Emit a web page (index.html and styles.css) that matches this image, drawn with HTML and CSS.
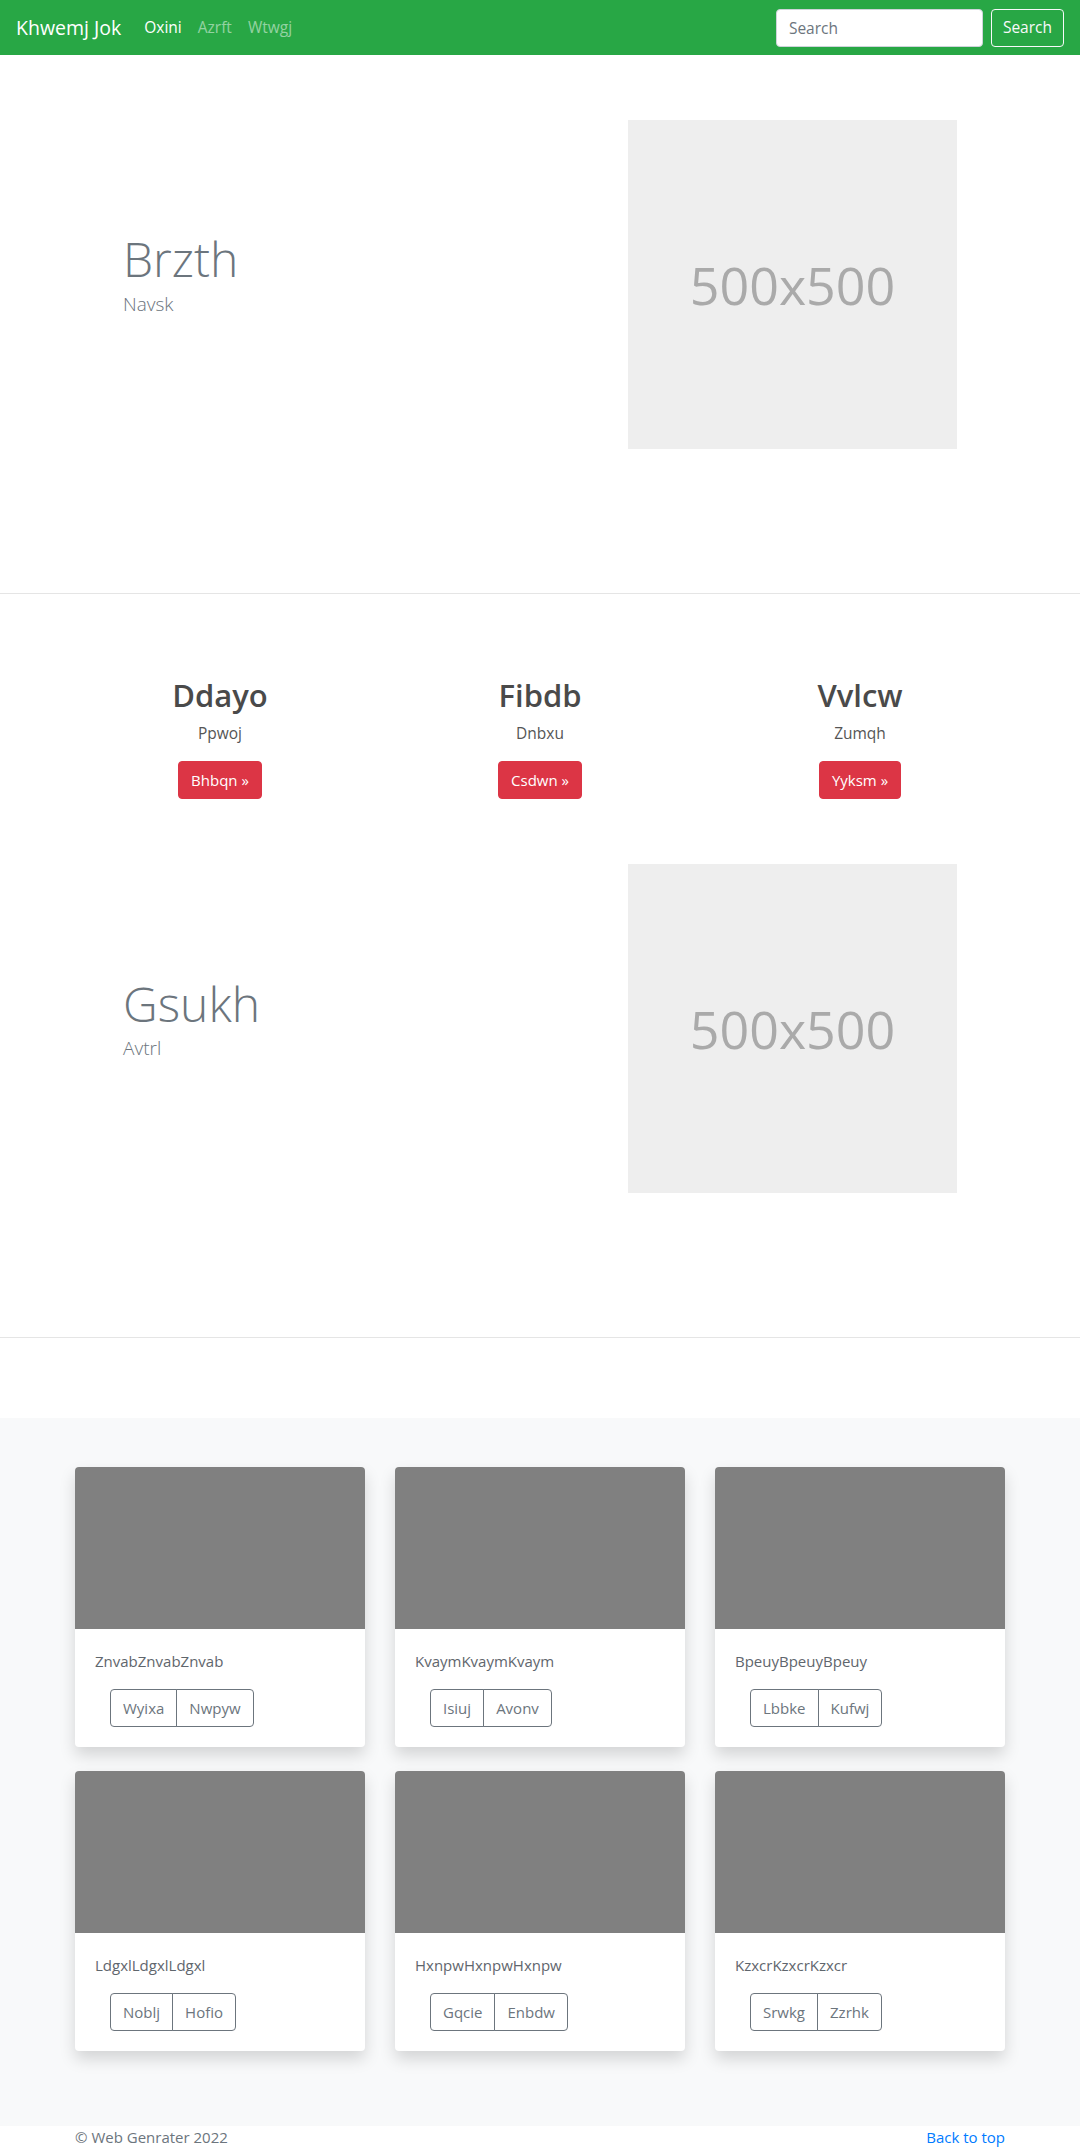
FILE: index.html
```html
<!DOCTYPE html>
<html lang="en">
<head>
<meta charset="utf-8">
<title>Khwemj Jok</title>
<link rel="stylesheet" href="styles.css">
</head>
<body>
<nav class="navbar">
  <a class="brand" href="#">Khwemj Jok</a>
  <ul class="nav">
    <li><a class="nav-link active" href="#">Oxini</a></li>
    <li><a class="nav-link" href="#">Azrft</a></li>
    <li><a class="nav-link" href="#">Wtwgj</a></li>
  </ul>
  <form class="search">
    <input class="search-input" type="text" placeholder="Search">
    <button class="search-btn" type="button">Search</button>
  </form>
</nav>

<section class="hero">
  <div class="container hero-row">
    <div class="hero-text">
      <h1 class="display">Brzth</h1>
      <p class="lead">Navsk</p>
    </div>
    <div class="hero-media">
      <div class="placeholder">500x500</div>
    </div>
  </div>
</section>
<hr class="divider">

<section class="features">
  <div class="feature-row">
    <div class="feature">
      <h2>Ddayo</h2>
      <p>Ppwoj</p>
      <a class="btn-danger" href="#">Bhbqn &raquo;</a>
    </div>
    <div class="feature">
      <h2>Fibdb</h2>
      <p>Dnbxu</p>
      <a class="btn-danger" href="#">Csdwn &raquo;</a>
    </div>
    <div class="feature">
      <h2>Vvlcw</h2>
      <p>Zumqh</p>
      <a class="btn-danger" href="#">Yyksm &raquo;</a>
    </div>
  </div>
</section>

<section class="hero">
  <div class="container hero-row">
    <div class="hero-text">
      <h1 class="display">Gsukh</h1>
      <p class="lead">Avtrl</p>
    </div>
    <div class="hero-media">
      <div class="placeholder">500x500</div>
    </div>
  </div>
</section>
<hr class="divider">

<section class="album">
  <div class="container card-grid">
    <div class="card">
      <div class="card-img"></div>
      <div class="card-body">
        <p class="card-text">ZnvabZnvabZnvab</p>
        <div class="btn-group"><button type="button">Wyixa</button><button type="button">Nwpyw</button></div>
      </div>
    </div>
    <div class="card">
      <div class="card-img"></div>
      <div class="card-body">
        <p class="card-text">KvaymKvaymKvaym</p>
        <div class="btn-group"><button type="button">Isiuj</button><button type="button">Avonv</button></div>
      </div>
    </div>
    <div class="card">
      <div class="card-img"></div>
      <div class="card-body">
        <p class="card-text">BpeuyBpeuyBpeuy</p>
        <div class="btn-group"><button type="button">Lbbke</button><button type="button">Kufwj</button></div>
      </div>
    </div>
    <div class="card">
      <div class="card-img"></div>
      <div class="card-body">
        <p class="card-text">LdgxlLdgxlLdgxl</p>
        <div class="btn-group"><button type="button">Noblj</button><button type="button">Hofio</button></div>
      </div>
    </div>
    <div class="card">
      <div class="card-img"></div>
      <div class="card-body">
        <p class="card-text">HxnpwHxnpwHxnpw</p>
        <div class="btn-group"><button type="button">Gqcie</button><button type="button">Enbdw</button></div>
      </div>
    </div>
    <div class="card">
      <div class="card-img"></div>
      <div class="card-body">
        <p class="card-text">KzxcrKzxcrKzxcr</p>
        <div class="btn-group"><button type="button">Srwkg</button><button type="button">Zzrhk</button></div>
      </div>
    </div>
  </div>
</section>

<footer class="footer container">
  <p class="copy">&copy; Web Genrater 2022</p>
  <a class="to-top" href="#">Back to top</a>
</footer>
</body>
</html>
```

FILE: styles.css
```css
* { box-sizing: border-box; }

html, body { margin: 0; padding: 0; }

body {
  font-family: "Open Sans", "Liberation Sans", sans-serif;
  font-size: 16px;
  line-height: 1.5;
  color: #212529;
  background: #fff;
}

a { text-decoration: none; }

.container {
  width: 960px;
  margin: 0 auto;
  padding: 0 15px;
}

/* Navbar */
.navbar {
  height: 55px;
  background: #28a745;
  display: flex;
  align-items: center;
  padding: 0 16px;
}

.brand {
  font-size: 19.5px;
  line-height: 30px;
  color: #fff;
  margin-right: 15px;
}

.nav {
  list-style: none;
  margin: 0;
  padding: 0;
  display: flex;
}

.nav-link {
  display: block;
  padding: 8px 8px;
  font-size: 15.5px;
  color: rgba(255, 255, 255, 0.5);
}

.nav-link.active { color: #fff; }

.search {
  margin-left: auto;
  display: flex;
  gap: 8px;
}

.search-input {
  width: 207px;
  height: 38px;
  padding: 6px 12px;
  font-family: inherit;
  font-size: 15.5px;
  color: #495057;
  background: #fff;
  border: 1px solid #ced4da;
  border-radius: 4px;
}

.search-input::placeholder { color: #6c757d; }

.search-btn {
  height: 38px;
  padding: 6px 11px;
  font-family: inherit;
  font-size: 15.5px;
  line-height: 1.5;
  color: #f8f9fa;
  background: transparent;
  border: 1px solid #f8f9fa;
  border-radius: 4px;
}

/* Hero */
.hero {
  padding: 65px 0 144px;
}

.hero-row {
  display: flex;
  align-items: center;
}

.hero-text {
  flex: 1;
  padding: 0 48px;
}

.hero-media {
  flex: 1;
  display: flex;
  justify-content: flex-end;
  padding-right: 48px;
}

.display {
  margin: 0 0 2px;
  font-size: 48px;
  font-weight: 300;
  line-height: 1.2;
  color: #6c757d;
}

.lead {
  margin: 0 0 20px;
  font-size: 19px;
  font-weight: 300;
  color: #6c757d;
}

.placeholder {
  width: 329px;
  height: 329px;
  background: #eeeeee;
  color: #aaaaaa;
  font-size: 52px;
  display: flex;
  align-items: center;
  justify-content: center;
}

.divider {
  margin: 0;
  border: 0;
  border-top: 1px solid rgba(0, 0, 0, 0.1);
}

/* Features */
.features {
  padding-top: 82px;
}

.feature-row {
  width: 960px;
  margin: 0 auto;
  display: grid;
  grid-template-columns: repeat(3, 1fr);
}

.feature {
  text-align: center;
  padding: 0 15px;
}

.feature h2 {
  margin: 0 0 8px;
  font-size: 31px;
  font-weight: 600;
  line-height: 38px;
  color: #4a4a4a;
}

.feature p {
  margin: 0 0 16px;
  font-size: 15.5px;
  color: #555;
}

.btn-danger {
  display: inline-block;
  padding: 6px 12px;
  font-size: 15px;
  line-height: 24px;
  color: #fff;
  background: #dc3545;
  border: 1px solid #dc3545;
  border-radius: 4px;
}

/* Album */
.album {
  margin-top: 80px;
  background: #f8f9fa;
  padding: 49px 0 51px;
}

.card-grid {
  display: grid;
  grid-template-columns: repeat(3, 290px);
  column-gap: 30px;
  row-gap: 24px;
  padding-bottom: 24px;
}

.card {
  background: #fff;
  border-radius: 4px;
  overflow: hidden;
  box-shadow: 0 8px 16px rgba(0, 0, 0, 0.15);
}

.card-img {
  height: 162px;
  background: #808080;
}

.card-body {
  padding: 20px;
}

.card-text {
  margin: 0 0 16px;
  color: #5f666d;
  font-size: 15px;
  line-height: 24px;
}

.btn-group {
  display: inline-flex;
  margin-left: 15px;
}

.btn-group button {
  height: 38px;
  padding: 6px 12px;
  font-family: inherit;
  font-size: 15px;
  line-height: 24px;
  color: #6c757d;
  background: transparent;
  border: 1px solid #6c757d;
}

.btn-group button:first-child {
  border-radius: 4px 0 0 4px;
}

.btn-group button + button {
  margin-left: -1px;
  border-radius: 0 4px 4px 0;
}

/* Footer */
.footer {
  display: flex;
  justify-content: space-between;
  padding-top: 0;
  padding-bottom: 48px;
}

.copy {
  margin: 0;
  color: #6c757d;
  font-size: 15px;
}

.to-top {
  color: #007bff;
  font-size: 15px;
}
```
